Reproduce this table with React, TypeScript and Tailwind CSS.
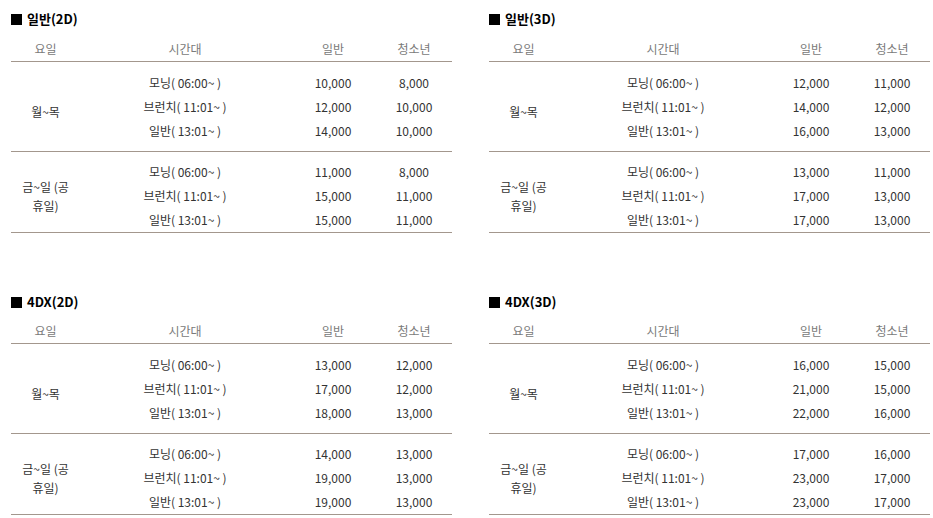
import React from "react";

type Group = { day: string[]; rows: [string, string, string][] };
type Table = { title: string; groups: Group[] };

const times = ["모닝( 06:00~ )", "브런치( 11:01~ )", "일반( 13:01~ )"];

const mk = (title: string, a: [string, string][], b: [string, string][]): Table => ({
  title,
  groups: [
    { day: ["월~목"], rows: a.map((p, i) => [times[i], p[0], p[1]]) },
    { day: ["금~일 (공", "휴일)"], rows: b.map((p, i) => [times[i], p[0], p[1]]) },
  ],
});

const tables: Table[] = [
  mk(
    "일반(2D)",
    [["10,000", "8,000"], ["12,000", "10,000"], ["14,000", "10,000"]],
    [["11,000", "8,000"], ["15,000", "11,000"], ["15,000", "11,000"]]
  ),
  mk(
    "일반(3D)",
    [["12,000", "11,000"], ["14,000", "12,000"], ["16,000", "13,000"]],
    [["13,000", "11,000"], ["17,000", "13,000"], ["17,000", "13,000"]]
  ),
  mk(
    "4DX(2D)",
    [["13,000", "12,000"], ["17,000", "12,000"], ["18,000", "13,000"]],
    [["14,000", "13,000"], ["19,000", "13,000"], ["19,000", "13,000"]]
  ),
  mk(
    "4DX(3D)",
    [["16,000", "15,000"], ["21,000", "15,000"], ["22,000", "16,000"]],
    [["17,000", "16,000"], ["23,000", "17,000"], ["23,000", "17,000"]]
  ),
];

const cols = "grid grid-cols-[69px_210px_86px_76px]";

function PriceTable({ t, second }: { t: Table; second: boolean }) {
  return (
    <div className="w-[441px]">
      <h3 className="flex items-center h-5 gap-[5px] text-[13px] font-bold text-black">
        <span className="w-[11px] h-[11px] bg-black" />
        {t.title}
      </h3>

      {/* header */}
      <div
        className={`${cols} ${second ? "mt-[6px]" : "mt-[7px]"} h-[26px] items-center border-b border-[#a3978d] text-[12px] text-[#7a7a7a]`}
      >
        <div className="text-center">요일</div>
        <div className="text-center">시간대</div>
        <div className="text-center">일반</div>
        <div className="text-center">청소년</div>
      </div>

      {t.groups.map((g, gi) => (
        <div
          key={gi}
          className={`flex border-b border-[#a3978d] ${gi === 0 ? "pt-[9px] pb-[8px]" : "pt-[8px]"}`}
        >
          <div
            className={`w-[69px] flex flex-col justify-center items-center text-[12px] leading-[19px] text-[#333] ${gi === 0 ? "pt-2" : ""}`}
          >
            {g.day.map((d) => (
              <span key={d}>{d}</span>
            ))}
          </div>
          <div className="flex-1">
            {g.rows.map((r, ri) => (
              <div key={ri} className="grid grid-cols-[210px_86px_76px] h-6 items-center text-[12px] text-[#333]">
                <div className="text-center whitespace-pre">{r[0]}</div>
                <div className="text-center">{r[1]}</div>
                <div className="text-center">{r[2]}</div>
              </div>
            ))}
          </div>
        </div>
      ))}
    </div>
  );
}

export default function App() {
  return (
    <div
      className="min-h-screen bg-white pl-[11px] pt-[9px]"
      style={{ fontFamily: '"Noto Sans CJK KR", "Noto Sans", sans-serif' }}
    >
      <div className="grid grid-cols-[441px_441px] gap-x-[37px] gap-y-[59px]">
        {tables.map((t, i) => (
          <PriceTable key={t.title} t={t} second={i >= 2} />
        ))}
      </div>
    </div>
  );
}
